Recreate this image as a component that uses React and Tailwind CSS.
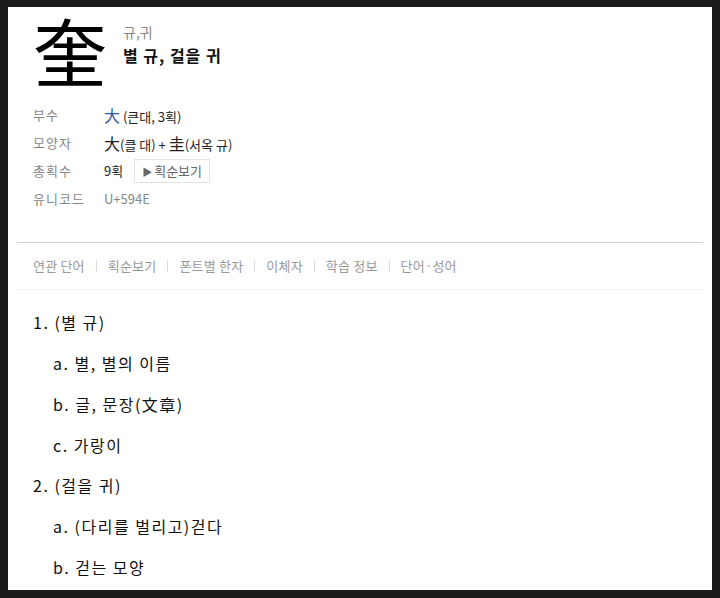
import { useState } from 'react'

const info = [
  { label: '부수', value: 'radical' },
  { label: '모양자', value: 'shape' },
  { label: '총획수', value: 'strokes' },
  { label: '유니코드', value: 'unicode' },
]

const tabs = ['연관 단어', '획순보기', '폰트별 한자', '이체자', '학습 정보', '단어·성어']

const meanings = [
  { title: '1. (별 규)', items: ['a. 별, 별의 이름', 'b. 글, 문장(文章)', 'c. 가랑이'] },
  { title: '2. (걸을 귀)', items: ['a. (다리를 벌리고)걷다', 'b. 걷는 모양'] },
]

const InfoValue = ({ type }) => {
  if (type === 'radical') {
    return (
      <span className="text-[13px] text-[#222]">
        <span className="text-[16px] text-[#2c5aa0]">大</span> (큰대, 3획)
      </span>
    )
  }
  if (type === 'shape') {
    return (
      <span className="text-[13px] text-[#222]">
        <span className="text-[16px]">大</span>(클 대) + <span className="text-[16px]">圭</span>(서옥 규)
      </span>
    )
  }
  if (type === 'strokes') {
    return (
      <span className="flex items-center text-[13px] text-[#222]">
        <span>9획</span>
        <button className="ml-[11px] flex h-[24px] items-center border border-[#e3e3e3] px-[7px] text-[13px] text-[#666]">
          <span className="mr-[2px] text-[10px] text-[#666]">▶</span>획순보기
        </button>
      </span>
    )
  }
  return <span className="text-[13px] text-[#888]">U+594E</span>
}

export default function App() {
  const [activeTab, setActiveTab] = useState(null)

  return (
    <div
      className="min-h-[598px] bg-[#1b1b1b] pb-[8px] pl-[8px] pr-[8px] pt-[7px]"
      style={{ fontFamily: '"Noto Sans CJK KR", "Noto Sans", sans-serif' }}
    >
      <div className="h-[583px] overflow-hidden bg-white">
        {/* Header */}
        <div className="flex items-start pl-[25px] pt-[2px]">
          <div className="text-[74px] leading-[80px] text-black">奎</div>
          <div className="ml-[16px] pt-[13px]">
            <div className="text-[14px] leading-[20px] text-[#888]">규,귀</div>
            <div className="mt-[2px] text-[16px] font-bold leading-[22px] tracking-[1px] text-[#111]">별 규, 걸을 귀</div>
          </div>
        </div>

        {/* Info table */}
        <div className="mt-[12px] pl-[25px]">
          {info.map((row) => (
            <div key={row.label} className="flex h-[28px] items-center">
              <span className="w-[71px] text-[13px] tracking-[1px] text-[#888]">{row.label}</span>
              <InfoValue type={row.value} />
            </div>
          ))}
        </div>

        {/* Tabs */}
        <div className="mx-[9px] mt-[29px] border-t border-[#cfcfcf]">
          <div className="flex h-[47px] items-center border-b border-[#f0f0f0] pl-[16px]">
            {tabs.map((tab, i) => (
              <div key={tab} className="flex items-center">
                {i > 0 && <span className="mx-[11px] h-[12px] w-px bg-[#dcdcdc]" />}
                <button
                  onClick={() => setActiveTab(tab)}
                  className={`text-[13px] tracking-[0.2px] ${activeTab === tab ? 'text-[#333]' : 'text-[#999]'}`}
                >
                  {tab}
                </button>
              </div>
            ))}
          </div>
        </div>

        {/* Meanings */}
        <div className="pl-[25px] pt-[16px]">
          {meanings.map((group) => (
            <div key={group.title}>
              <div className="flex h-[32px] items-center text-[16px] tracking-[1.5px] text-[#111]">{group.title}</div>
              {group.items.map((item) => (
                <div key={item} className="mt-[9px] flex h-[32px] items-center pl-[20px] text-[16px] tracking-[1.5px] text-[#111]">
                  {item}
                </div>
              ))}
              <div className="h-[8px]" />
            </div>
          ))}
        </div>
      </div>
    </div>
  )
}
